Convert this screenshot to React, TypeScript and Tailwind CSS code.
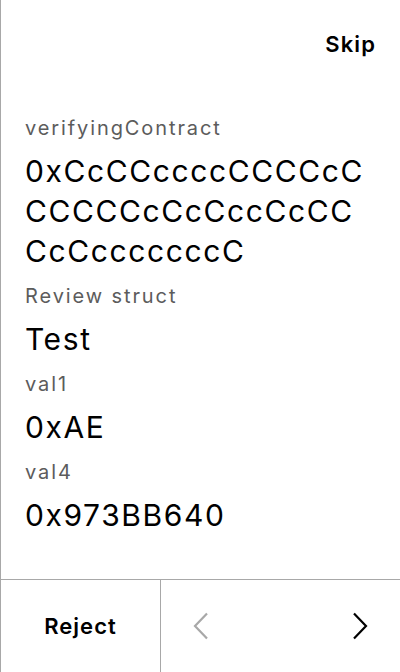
import React from "react";

const items: { label: string; value: string[] }[] = [
  { label: "verifyingContract", value: ["0xCcCCccccCCCCcC", "CCCCCcCcCccCcCC", "CcCcccccccC"] },
  { label: "Review struct", value: ["Test"] },
  { label: "val1", value: ["0xAE"] },
  { label: "val4", value: ["0x973BB640"] },
];

export default function App() {
  return (
    <div
      className="w-[400px] h-[672px] bg-white border-l border-[#a8a8a8] flex flex-col text-black"
      style={{ fontFamily: "Inter, 'Noto Sans', sans-serif" }}
    >
      <div className="h-[88px] flex items-center justify-end pr-[24px]">
        <span className="text-[22px] font-semibold leading-[28px] tracking-[1.1px]">Skip</span>
      </div>
      <div className="flex-1 flex flex-col gap-[9px] pl-[24px] pt-[24px]">
        {items.map((it) => (
          <div key={it.label} className="flex flex-col">
            <div className="text-[20px] leading-[32px] tracking-[1.9px] text-[#5c5c5c]">{it.label}</div>
            <div className="mt-[7px] text-[30px] leading-[40px] tracking-[1.6px]">
              {it.value.map((v) => (
                <div key={v}>{v}</div>
              ))}
            </div>
          </div>
        ))}
      </div>
      <div className="h-[93px] border-t border-[#a8a8a8] flex">
        <div className="w-[160px] border-r border-[#a8a8a8] flex items-center justify-center">
          <span className="text-[22px] font-semibold leading-[28px] tracking-[1px]">Reject</span>
        </div>
        <div className="flex-1 flex items-center justify-between px-[31px]">
          <svg width="18" height="28" viewBox="0 0 18 28" fill="none">
            <path d="M15 1.5 L3 14 L15 26.5" stroke="#a8a8a8" strokeWidth="2.2" />
          </svg>
          <svg width="18" height="28" viewBox="0 0 18 28" fill="none">
            <path d="M3 1.5 L15 14 L3 26.5" stroke="#000" strokeWidth="2.2" />
          </svg>
        </div>
      </div>
    </div>
  );
}
